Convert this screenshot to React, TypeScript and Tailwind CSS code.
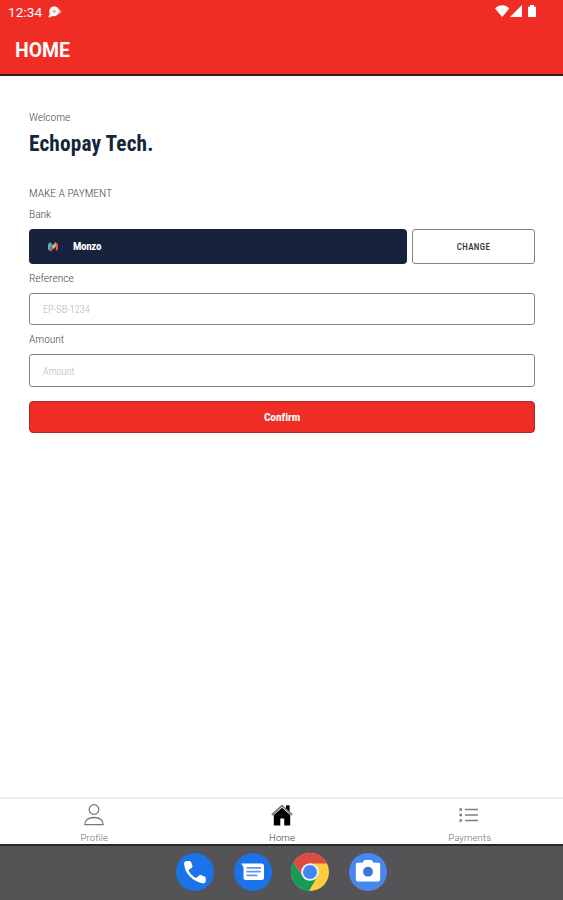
import type { ReactNode } from "react";

const FONT = "font-['Roboto_Condensed',Roboto,sans-serif] [font-stretch:75%]";

function StatusBar() {
  return (
    <div className="flex h-6 items-center justify-between pl-2 pr-[25px] text-white">
      <div className="flex items-center gap-[6px]">
        <span className="text-[13.7px] leading-6">12:34</span>
        <svg width="14" height="12" viewBox="0 0 14 12" fill="white">
          <circle cx="6.2" cy="5.3" r="4.9" />
          <path d="M2.5 6 0.2 11.4 6 9.8z" />
          <path d="M11 2.7 13.4 5.5 11 8.3z" opacity=".6" />
          <path d="M6.2 3.4v3.8M4.3 5.3h3.8" stroke="#f28a85" />
        </svg>
      </div>
      <svg width="43" height="14" viewBox="0 0 43 14" fill="white">
        <path d="M0 3.4C4-.9 10.3-.9 14.3 3.4L7.2 12z" />
        <path d="M27 0v12H15z" />
        <path d="M33 1.7h2V0h4v1.7h2V12h-8z" />
      </svg>
    </div>
  );
}

function Label({ children }: { children: ReactNode }) {
  return (
    <p className="h-[14px] text-[11.7px] font-light leading-3 tracking-[-0.1px] text-[#4b4b4e]">{children}</p>
  );
}

function Field({ label, placeholder, className }: { label: string; placeholder: string; className: string }) {
  return (
    <div className="flex flex-col gap-[7px]">
      <Label>{label}</Label>
      <input
        placeholder={placeholder}
        className={`w-full rounded-[3px] border border-[#858588] bg-white px-[13px] pt-px text-[10.3px] font-light placeholder:text-[#b5b5b5] ${className}`}
      />
    </div>
  );
}

function MonzoLogo() {
  return (
    <svg width="10" height="10" viewBox="0 0 10 10">
      <path d="M0 2.2 2.2 0v9.2L0 7.2z" fill="#4fb5bb" />
      <path d="M2.2 0 5 3.2v4L2.2 4.4z" fill="#4fb5a0" />
      <path d="M2.2 4.4 5 7.2 3.6 9.2H2.2z" fill="#e64b5f" />
      <path d="M7.8 0 5 3.2v4l2.8-2.8z" fill="#efc66a" />
      <path d="M7.8 0 10 2.2v5L7.8 9.2z" fill="#ef5265" />
    </svg>
  );
}

function Tab({ label, className, children }: { label: string; className: string; children: ReactNode }) {
  return (
    <a className={`flex flex-1 flex-col items-center pt-[5px] ${className}`}>
      <span className="flex h-[22px] items-center">{children}</span>
      <span className="mt-[6px] pl-px font-[Roboto] text-[9.5px] font-light leading-3 tracking-[0.15px] [font-stretch:100%]">
        {label}
      </span>
    </a>
  );
}

function Dock() {
  return (
    <div className="flex h-14 justify-center gap-[19.5px] border-t-2 border-[#29282c] bg-[#545356] pt-[7px]">
      <svg width="38" height="38" viewBox="0 0 38 38">
        <circle cx="19" cy="19" r="19" fill="#1a73e8" />
        <path
          transform="translate(4.4 4.2) scale(1.2)"
          fill="white"
          d="M6.62 10.79a15.05 15.05 0 0 0 6.59 6.59l2-2c.7-.7 1.5-.7 2.2-.4l2.7 1.1c.7.3 1 .9 1 1.6v2.1c0 1.3-.9 2.1-2.1 2.1C10.6 20.6 3.2 13.4 3.1 5.3 3.1 4 4 3.1 5.2 3.1h2.2c.7 0 1.3.4 1.5 1l1 2.6c.3.8.2 1.5-.4 2.1z"
        />
      </svg>
      <svg width="38" height="38" viewBox="0 0 38 38">
        <circle cx="19" cy="19" r="19" fill="#1a73e8" />
        <path d="M7 10.5h20.5a2.5 2.5 0 0 1 2.5 2.5v11.5a2.5 2.5 0 0 1-2.5 2.5H12a2.5 2.5 0 0 1-2.5-2.5V14z" fill="white" />
        <path d="M12.5 14.8H27M12.5 18.6H27M12.5 22.4h11" stroke="#5b98ed" strokeWidth="1.7" />
      </svg>
      <svg width="38" height="38" viewBox="0 0 38 38">
        <circle cx="19" cy="19" r="19" fill="#ffcd40" />
        <path d="M2.55 9.5A19 19 0 0 0 18 38L26.5 23.3 19 19 11.6 23.3z" fill="#149b58" />
        <path d="M2.55 9.5 11.6 23.3 19 10.5H36A19 19 0 0 0 2.55 9.5z" fill="#dd4b3e" />
        <circle cx="19" cy="19" r="8.8" fill="#f1f3f6" />
        <circle cx="19" cy="19" r="7" fill="#4285f4" />
      </svg>
      <svg width="38" height="38" viewBox="0 0 38 38">
        <circle cx="19" cy="19" r="19" fill="#4688ed" />
        <path d="M8.6 9.8h5L15.4 7h7.2l1.8 2.8h5a1.8 1.8 0 0 1 1.8 1.8v15a1.8 1.8 0 0 1-1.8 1.8H8.6a1.8 1.8 0 0 1-1.8-1.8v-15a1.8 1.8 0 0 1 1.8-1.8z" fill="white" />
        <circle cx="19" cy="18.7" r="4.9" fill="#3878dc" />
      </svg>
    </div>
  );
}

export default function App() {
  return (
    <div className="flex h-[900px] w-[563px] flex-col overflow-hidden bg-white font-[Roboto]">
      <header className="h-[76px] border-b-2 border-[#35191e] bg-[#ef2d25]">
        <StatusBar />
        <h1 className="mt-[14px] pl-[15px] text-[19.4px] font-bold leading-[26px] text-white">HOME</h1>
      </header>

      <main className={`flex flex-1 flex-col pl-[29px] pr-[28px] pt-[35px] ${FONT}`}>
        <Label>Welcome</Label>
        <h2 className="mt-[6px] text-[21.3px] font-bold leading-[26px] tracking-[0.15px] text-[#17243a]">Echopay Tech.</h2>
        <div className="mt-[30px] flex flex-col gap-[7px]">
          <Label>MAKE A PAYMENT</Label>
          <Label>Bank</Label>
        </div>
        <div className="mt-[7px] flex h-[35px] gap-[5px]">
          <div className="flex w-[378px] items-center rounded-[4px] bg-[#17233c] pl-[19px] text-[11px] font-bold text-white">
            <MonzoLogo />
            <span className="ml-[15px] pt-px tracking-[-0.3px]">Monzo</span>
          </div>
          <button className="flex-1 rounded-[3px] border border-[#858588] pt-[2px] text-[9px] font-medium tracking-[0.35px] text-[#333]">
            CHANGE
          </button>
        </div>
        <div className="mt-2 flex flex-col gap-2">
          <Field label="Reference" placeholder="EP-SB-1234" className="h-[32px]" />
          <Field label="Amount" placeholder="Amount" className="h-[33px]" />
        </div>
        <button className="mt-[14px] h-8 shrink-0 rounded-[4px] border border-[#a52c2d] bg-[#ef2d25] pt-px text-[11.5px] font-bold tracking-[-0.1px] text-white">
          Confirm
        </button>
      </main>

      <nav className="flex h-[47px] border-t-2 border-[#efefef]">
        <Tab label="Profile" className="text-[#6c6c70]">
          <svg width="20" height="22" viewBox="0 0 20 22" fill="none" stroke="#77777b" strokeWidth="1.3">
            <circle cx="10" cy="5.5" r="4.8" />
            <path d="M.8 20.7c0-4.6 3.8-7.2 9.2-7.2s9.2 2.6 9.2 7.2z" strokeLinejoin="round" />
          </svg>
        </Tab>
        <Tab label="Home" className="text-[#333]">
          <svg width="22" height="22" viewBox="0 0 22 22">
            <path d="M2.8 11 11 3.8l8.2 7.2v10.5h-6v-7H9.3v7H2.8z" fill="black" />
            <path d="M15 1.2h3.6v7L15 5z" fill="black" />
            <path d="M.8 11 11 1.7 21.2 11" fill="none" stroke="#777" strokeWidth="1.7" />
          </svg>
        </Tab>
        <Tab label="Payments" className="text-[#6c6c70]">
          <svg width="20" height="16" viewBox="0 0 20 16" stroke="#808083" strokeWidth="1.5">
            <path d="M6 2.5h13M6 8h13M6 13.5h13" />
            <path d="M.4 2.5h2.6M.4 8h2.6M.4 13.5h2.6" strokeWidth="2.6" />
          </svg>
        </Tab>
      </nav>
      <Dock />
    </div>
  );
}
